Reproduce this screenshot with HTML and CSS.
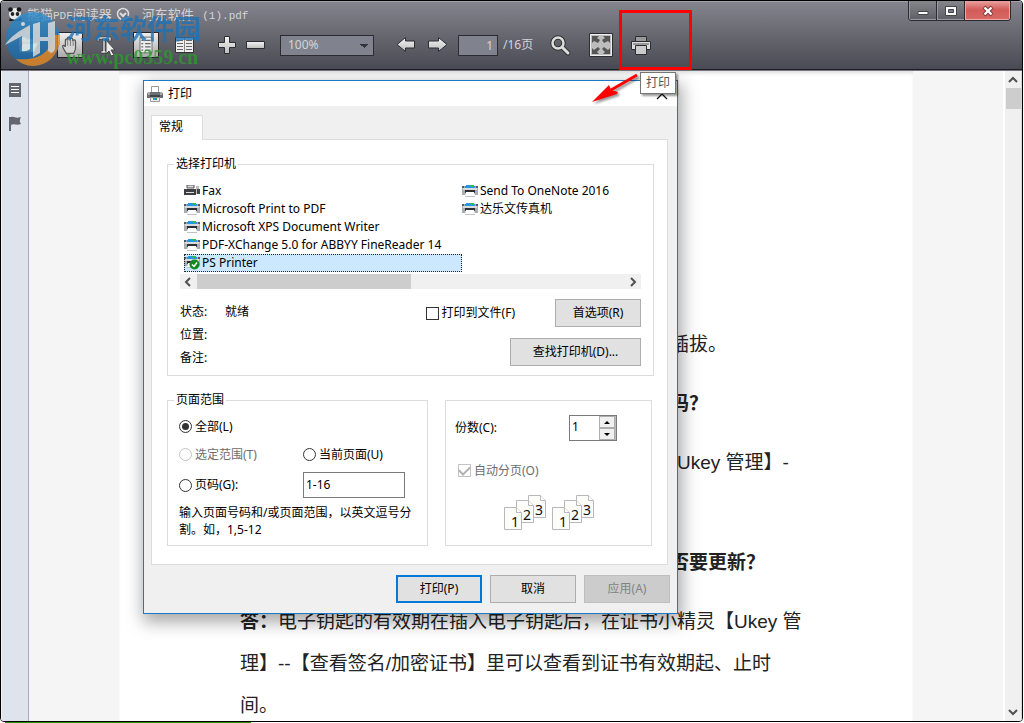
FILE: index.html
```
<!DOCTYPE html>
<html lang="zh-CN">
<head>
<meta charset="utf-8">
<title>熊猫PDF阅读器</title>
<link rel="stylesheet" href="styles.css">
</head>
<body>
<svg class="defs" aria-hidden="true">
  <defs>
    <linearGradient id="silver" x1="0" y1="0" x2="0" y2="1"><stop offset="0" stop-color="#f4f4f4"/><stop offset="1" stop-color="#bdbdbd"/></linearGradient>
    <linearGradient id="globe" x1="0" y1="0" x2="0" y2="1"><stop offset="0" stop-color="#2f8fd0"/><stop offset="1" stop-color="#1565a5"/></linearGradient>
    <symbol id="printer" viewBox="0 0 16 12">
      <path d="M1 1h14l1 3v6H0V4z" fill="#a9adb0"/>
      <path d="M0 1h2v2H0zM14 1h2v2h-2z" fill="#555a5e"/>
      <path d="M4 0h8v1h1v2H3V1h1z" fill="#2497e8"/>
      <path d="M8 0h4v2H9z" fill="#2fc03b"/>
      <path d="M1 3h14v2H1z" fill="#d8dadb"/>
      <path d="M3 5h10v3H3z" fill="#2c2f31"/>
      <path d="M4 7h8l1 4H3z" fill="#fff"/>
      <path d="M3 11h10v1H3z" fill="#bfc2c4"/>
    </symbol>
    <symbol id="sheets" viewBox="0 0 44 36">
      <g fill="#fcfcf8" stroke="#b8b8b8">
        <path d="M24.500 .5h12l5 5v17h-17z"/><path d="M36.500 .5v5h5" fill="#fff"/>
        <path d="M12.500 5.500h12l5 5v17h-17z"/><path d="M24.500 5.500v5h5" fill="#fff"/>
        <path d="M.5 12.500h12l5 5v17H.5z"/><path d="M12.500 12.500v5h5" fill="#fff"/>
      </g>
      <g font-family="'Noto Sans', sans-serif" font-size="14" fill="#111">
        <text x="7" y="32">1</text><text x="19" y="25">2</text><text x="31" y="20">3</text>
      </g>
    </symbol>
  </defs>
</svg>

<div class="app">
  <header class="chrome">
    <div class="titlebar">
      <svg class="panda" viewBox="0 0 15 14"><ellipse cx="7" cy="7" rx="6" ry="6" fill="#e8e8e8"/><circle cx="2.500" cy="2.500" r="2.300" fill="#151515"/><circle cx="11" cy="2.500" r="2.300" fill="#151515"/><ellipse cx="4.500" cy="7" rx="1.800" ry="2" fill="#222"/><ellipse cx="9.500" cy="7" rx="1.800" ry="2" fill="#222"/><path d="M2 11q5 4 11-1l1 4H1z" fill="#1c1c1c"/></svg>
      <span class="app-name">熊猫<span class="latin">PDF</span>阅读器</span>
      <button class="plain menu-btn" aria-label="菜单"><svg width="14" height="14" viewBox="0 0 14 14" fill="none" stroke="#ddd"><circle cx="7" cy="7" r="5.500" stroke-width="1.500"/><path d="M4 6l3 3 3-3" stroke-width="2"/></svg></button>
      <span class="doc-name">河东软件 <span class="latin">(1).pdf</span></span>
      <div class="win-controls">
        <button class="win" aria-label="最小化"><svg width="12" height="10" viewBox="0 0 12 10"><path d="M1 5.500h10v3H1z" fill="#fff" stroke="#444"/></svg></button>
        <button class="win" aria-label="最大化"><svg width="12" height="10" viewBox="0 0 12 10"><path d="M.5 .5h11v9H.5z" fill="#fff" stroke="#444"/><path d="M3.500 3.500h5v3h-5z" fill="#778" stroke="#445"/></svg></button>
        <button class="win close" aria-label="关闭"><svg width="12" height="12" viewBox="0 0 12 12"><path d="M2 2l8 8M10 2l-8 8" stroke="#7c3431" stroke-width="4"/><path d="M2.500 2.500l7 7M9.500 2.500l-7 7" stroke="#fff" stroke-width="2.400"/></svg></button>
      </div>
    </div>
    <div class="toolbar">
      <div class="tools files">
        <button class="tool" aria-label="打开"><svg viewBox="0 0 26 26"><path d="M0 5h6l2 2h6v12H0z" fill="#d9cf9c" stroke="#8c8560"/><path d="M3 11h16l-4 9H0z" fill="#f2ebc0" stroke="#8c8560"/></svg></button>
        <button class="tool on" aria-label="手形"><svg viewBox="0 0 26 26"><path d="M9 22c-2-3-4-6-4-8 0-1 2-1 3 1V8c0-2 2-2 2 0V6c0-2 3-2 3 0v1c0-2 3-2 3 0v2c0-2 3-2 3 0v7c0 3-1 4-2 6z" fill="#d4d4d4" stroke="#555" stroke-width="1.300"/><path d="M10.500 8v6M13.500 7v7M16.500 9v5" stroke="#777"/></svg></button>
        <button class="tool" aria-label="选择文本"><svg viewBox="0 0 26 26"><path d="M2 5h14v4h-2V7h-4v12h3v2H6v-2h2V7H4v2H2z" fill="#eee" stroke="#333" stroke-width=".6"/><path d="M11 8l9 10h-4l3 5-3 1-2-5-3 3z" fill="#ececec" stroke="#444"/></svg></button>
        <button class="tool on" aria-label="单页"><svg viewBox="0 0 26 26"><path d="M6.500 4.500h13v17h-13z" fill="#eee" stroke="#666"/><path d="M8 8h2M12 8h6M8 11.500h2M12 11.500h6M8 15h2M12 15h6M8 18.500h2M12 18.500h6" stroke="#666" stroke-width="1.300"/></svg></button>
        <button class="tool" aria-label="双页"><svg viewBox="0 0 26 26"><path d="M4.500 5.500h18v15h-18z" fill="#eee" stroke="#333"/><path d="M6 8.500h6M6 11.500h6M6 14.500h6M6 17.500h6M15 8.500h6M15 11.500h6M15 14.500h6M15 17.500h6" stroke="#666"/><path d="M13.500 6v14" stroke="#888"/></svg></button>
      </div>
      <div class="tools zoom">
        <button class="tool" aria-label="放大"><svg viewBox="0 0 26 26"><path d="M10.500 4.500h5v6h6v5h-6v6h-5v-6h-6v-5h6z" fill="url(#silver)" stroke="#2c2c32"/></svg></button>
        <button class="tool" aria-label="缩小"><svg viewBox="0 0 26 26"><path d="M4.500 9.500h18v7h-18z" fill="url(#silver)" stroke="#2c2c32"/></svg></button>
      </div>
      <select class="zoom-level" aria-label="缩放"><option>100%</option></select>
      <div class="tools nav">
        <button class="tool" aria-label="上一页"><svg viewBox="0 0 26 26"><path d="M4 12.500L12.500 5.500v3.500h9v7h-9v3.500z" fill="url(#silver)" stroke="#2c2c32"/></svg></button>
        <button class="tool" aria-label="下一页"><svg viewBox="0 0 26 26"><path d="M23 12.500L14.500 5.500v3.500h-10v7h10v3.500z" fill="url(#silver)" stroke="#2c2c32"/></svg></button>
      </div>
      <input class="page-no" type="text" value="1" aria-label="页码">
      <span class="page-total">/16页</span>
      <div class="tools extra">
        <button class="tool" aria-label="搜索"><svg viewBox="0 0 26 26"><circle cx="10" cy="11" r="5.500" fill="none" stroke="#333" stroke-width="4.500"/><path d="M14 15l6 6" stroke="#333" stroke-width="5" stroke-linecap="round"/><circle cx="10" cy="11" r="5.500" fill="none" stroke="#ddd" stroke-width="2.500"/><path d="M14.500 15.500l5.500 5.500" stroke="#ddd" stroke-width="3" stroke-linecap="round"/></svg></button>
        <button class="tool" aria-label="全屏"><svg viewBox="0 0 26 26"><path d="M1.500 1.500h23v23h-23z" fill="#bdbdbd" stroke="#2c2c32"/><path d="M2.500 2.500h21v21h-21z" fill="none" stroke="#eee"/><g fill="#555"><path d="M4 4h7l-2 2 3 2-2 3-4-2-2 2z"/><path d="M22 4h-7l2 2-3 2 2 3 4-2 2 2z"/><path d="M4 22h7l-2-2 3-3-2-2-4 3-2-2z"/><path d="M22 22h-7l2-2-3-3 2-2 4 3 2-2z"/></g></svg></button>
        <button class="tool" aria-label="打印"><svg viewBox="0 0 26 26"><path d="M7.500 4.500h11v5h-11z" fill="#999" stroke="#2c2c32"/><path d="M3.500 9.500h19v8h-19z" fill="#ddd" stroke="#2c2c32"/><path d="M5 12h16" stroke="#555"/><path d="M7.500 13.500h11v9h-11z" fill="#ccc" stroke="#2c2c32"/></svg></button>
      </div>
    </div>
  </header>

  <div class="workspace">
    <nav class="rail">
      <button class="plain" aria-label="目录"><svg width="12" height="14" viewBox="0 0 12 14"><path d="M0 0h12v14H0z" fill="#63666e"/><path d="M2 3.500h8M2 6.500h8M2 9.500h8" stroke="#fff"/></svg></button>
      <button class="plain" aria-label="书签"><svg width="12" height="16" viewBox="0 0 12 16"><path d="M0 1h2v14H0z" fill="#63666e"/><path d="M2 1c4-1 4 2 10 0-2 4-1 5 0 7-5 2-6-1-10 1z" fill="#63666e"/></svg></button>
    </nav>
    <main class="canvas">
      <article class="page">
        <p class="tail">插拔。</p>
        <p class="tail strong">吗？</p>
        <p class="tail link-line">【Ukey 管理】-</p>
        <p class="tail strong question">否要更新？</p>
        <p><b>答：</b>电子钥匙的有效期在插入电子钥匙后，在证书小精灵【Ukey 管<br>理】--【查看签名/加密证书】里可以查看到证书有效期起、止时<br>间。</p>
      </article>
    </main>
    <div class="vscroll">
      <svg width="10" height="8" viewBox="0 0 10 8"><path d="M1 6l4-4 4 4" fill="none" stroke="#505050" stroke-width="2"/></svg>
      <div class="vthumb"></div>
      <svg class="end" width="10" height="8" viewBox="0 0 10 8"><path d="M1 2l4 4 4-4" fill="none" stroke="#505050" stroke-width="2"/></svg>
    </div>
  </div>

  <form class="dialog" role="dialog" aria-label="打印">
    <div class="dlg-title">
      <svg width="16" height="16" viewBox="0 0 16 16"><path d="M4.500 .5h7v6h-7z" fill="#fff" stroke="#999"/><path d="M1 6h14l1 2v4H0V8z" fill="#6a7075"/><path d="M1 6h2v3H1zM13 6h2v3h-2z" fill="#aaa"/><path d="M3 9h10v2H3z" fill="#3f4448"/><path d="M3.500 11.500h9v4h-9z" fill="#eee" stroke="#999"/><path d="M6 12h2v2H6z" fill="#2497e8"/><path d="M8 12h2v2H8z" fill="#2a9a68"/></svg>
      <span>打印</span>
      <button type="button" class="plain dlg-close" aria-label="关闭"><svg width="12" height="12" viewBox="0 0 12 12"><path d="M1 1l10 10M11 1L1 11" stroke="#111" stroke-width="1.200"/></svg></button>
    </div>
    <div class="dlg-body">
      <button type="button" class="tab">常规</button>
      <div class="panel">
        <fieldset class="group">
          <legend>选择打印机</legend>
          <ul class="printers">
            <li><svg width="16" height="12" viewBox="0 0 16 12"><path d="M3 0h7v3H3z" fill="#ddd" stroke="#555"/><path d="M0 4h12v6H0z" fill="#3c4043"/><path d="M2 7h8v1H2z" fill="#ddd"/><path d="M12 1h3v8h-3z" fill="#bbb"/><path d="M13 4h3v5h-3z" fill="#444"/></svg>Fax</li>
            <li><svg width="16" height="12"><use href="#printer"/></svg>Microsoft Print to PDF</li>
            <li><svg width="16" height="12"><use href="#printer"/></svg>Microsoft XPS Document Writer</li>
            <li><svg width="16" height="12"><use href="#printer"/></svg>PDF-XChange 5.0 for ABBYY FineReader 14</li>
            <li class="selected"><svg width="16" height="14" viewBox="0 0 16 14"><use href="#printer" width="16" height="12"/><circle cx="10.500" cy="8.500" r="5" fill="#128a1f"/><path d="M8 8.500l2 2 3-4" fill="none" stroke="#fff" stroke-width="1.400"/></svg>PS Printer</li>
            <li><svg width="16" height="12"><use href="#printer"/></svg>Send To OneNote 2016</li>
            <li><svg width="16" height="12"><use href="#printer"/></svg>达乐文传真机</li>
          </ul>
          <div class="hscroll">
            <svg width="8" height="10" viewBox="0 0 8 10"><path d="M6 1L2 5l4 4" fill="none" stroke="#505050" stroke-width="2"/></svg>
            <div class="hthumb"></div>
            <svg class="end" width="8" height="10" viewBox="0 0 8 10"><path d="M2 1l4 4-4 4" fill="none" stroke="#505050" stroke-width="2"/></svg>
          </div>
          <div class="status">
            <dl>
              <dt>状态:</dt><dd>就绪</dd>
              <dt>位置:</dt><dd></dd>
              <dt>备注:</dt><dd></dd>
            </dl>
            <div class="status-actions">
              <div class="to-file">
                <label class="choice"><input type="checkbox">打印到文件(F)</label>
                <button type="button" class="btn">首选项(R)</button>
              </div>
              <button type="button" class="btn find">查找打印机(D)...</button>
            </div>
          </div>
        </fieldset>

        <div class="lower">
          <fieldset class="group range">
            <legend>页面范围</legend>
            <div class="range-grid">
              <label class="choice whole"><input type="radio" name="range" checked>全部(L)</label>
              <label class="choice off"><input type="radio" name="range" disabled>选定范围(T)</label>
              <label class="choice"><input type="radio" name="range">当前页面(U)</label>
              <label class="choice"><input type="radio" name="range">页码(G):</label>
              <input class="pages" type="text" value="1-16" aria-label="页码">
            </div>
            <p class="hint">输入页面号码和/或页面范围，以英文逗号分<br>割。如，1,5-12</p>
          </fieldset>
          <div class="group copies">
            <div class="copies-row">
              <label for="copies">份数(C):</label>
              <div class="spinner">
                <input id="copies" type="text" value="1">
                <div class="steps">
                  <button type="button" aria-label="增加"><svg width="6" height="3"><path d="M0 3l3-3 3 3z"/></svg></button>
                  <button type="button" aria-label="减少"><svg width="6" height="3"><path d="M0 0l3 3 3-3z"/></svg></button>
                </div>
              </div>
            </div>
            <label class="choice off collate"><input type="checkbox" checked disabled>自动分页(O)</label>
            <div class="sets">
              <svg width="44" height="36"><use href="#sheets"/></svg>
              <svg width="44" height="36"><use href="#sheets"/></svg>
            </div>
          </div>
        </div>
      </div>
      <div class="dlg-actions">
        <button type="button" class="btn primary">打印(P)</button>
        <button type="button" class="btn">取消</button>
        <button type="button" class="btn" disabled>应用(A)</button>
      </div>
    </div>
  </form>

  <div class="highlight"></div>
  <svg class="arrow" width="56" height="40" viewBox="0 0 56 40"><path d="M48 4L22 19" stroke="#f00" stroke-width="3"/><path d="M3 31L20 14l2 5 7 2-1 2z" fill="#f00"/></svg>
  <div class="tooltip">打印</div>

  <div class="watermark" aria-hidden="true">
    <svg width="58" height="56" viewBox="0 0 58 56">
      <circle cx="28" cy="28" r="27" fill="url(#globe)"/>
      <path d="M55 24c1 17-11 31-27 31-7 0-13-3-17-7 26 2 34-8 38-24z" fill="#e58a25"/>
      <path d="M0 34C6 25 14 20 25 14v24q-4 3-8 2V25Q8 30 0 34z" fill="#e9edf0" opacity=".9"/>
      <path d="M28 13l7-2v15h8V12l7-2v27q0 4-4 5l-3-2V30h-8v12l-7 4z" fill="#e9edf0" opacity=".9"/>
      <circle cx="18" cy="13" r="2" fill="#e9edf0"/>
    </svg>
    <div class="wm-text"><span class="wm-name">河东软件园</span><span class="wm-url">www.pc0359.cn</span></div>
  </div>
</div>
<div class="desktop-edge"></div>
</body>
</html>
```
FILE: styles.css
```
* { box-sizing: border-box; }

body {
  margin: 0;
  height: 100vh;
  overflow: hidden;
  background: #fff;
  font: 12px/16px "Noto Sans", "Noto Sans CJK SC", sans-serif;
  color: #000;
}

.defs { position: absolute; width: 0; height: 0; }

button, input, select { font: inherit; color: inherit; margin: 0; }
p, ul, dl, dd { margin: 0; padding: 0; }
svg { display: block; flex: none; }

.plain { border: 0; padding: 0; background: none; }

.app {
  position: relative;
  display: flex;
  flex-direction: column;
  height: calc(100vh - 1px);
  margin-right: 1px;
  border: 1px solid #000;
  border-radius: 4px;
  overflow: hidden;
  background: #fff;
}

.desktop-edge {
  width: 246px;
  height: 1px;
  margin-left: 5px;
  background: #2f8f0a;
}

/* Window chrome */
.chrome {
  flex: none;
  height: 69px;
  border-top: 1px solid #a2a2a8;
  border-bottom: 1px solid #1e1e24;
  background: linear-gradient(#84848e, #66676f 50%, #4a4a54);
  color: #d4d4d8;
}

.titlebar {
  display: flex;
  align-items: flex-start;
  height: 26px;
  padding-left: 7px;
  font-size: 13px;
  line-height: 24px;
}
.panda { width: 15px; height: 14px; margin-top: 5px; }
.latin { font-family: "Liberation Mono", monospace; font-size: 11px; }
.app-name { margin-left: 4px; }
.menu-btn { margin: 5px 0 0 4px; }
.doc-name { margin-left: 12px; }
.doc-name .latin { margin-left: 5px; }

.win-controls {
  display: flex;
  margin: -1px 11px 0 auto;
  border: 1px solid #2a2a30;
  border-top: 0;
  border-radius: 0 0 4px 4px;
  overflow: hidden;
}
.win {
  display: grid;
  place-items: center;
  width: 28px;
  height: 19px;
  padding: 2px 0 0;
  border: 1px solid #9a9aa2;
  border-width: 0 1px 1px;
  background: linear-gradient(#85868c, #606168);
}
.win + .win { box-shadow: -1px 0 #2a2a30; }
.win.close {
  width: 45px;
  border-color: #eea9a5;
  background: linear-gradient(#e9a19f, #d25a57 50%, #d86a66);
}

.toolbar { display: flex; align-items: center; height: 34px; padding-left: 18px; }
.tools { display: flex; }
.files { gap: 12px; }
.zoom { gap: 2px; margin-left: 17px; }
.nav { gap: 5px; margin-left: 19px; }
.extra { gap: 14px; margin-left: 14px; }
.tool { width: 26px; height: 26px; padding: 0; border: 0; background: none; }
.tool svg { width: 26px; height: 26px; }
.tool.on {
  border: 1px solid #24242a;
  background: linear-gradient(#eee, #aaa);
}
.tool.on svg { width: 24px; height: 24px; }

.zoom-level {
  width: 94px;
  height: 21px;
  margin-left: 12px;
  padding: 0 7px;
  border: 1px solid #2b2b31;
  border-radius: 0;
  appearance: none;
  background: conic-gradient(from -45deg at 50% 100%, #33333b 90deg, transparent 0) 79px 8px / 8px 4px no-repeat, #80838d;
}
.page-no {
  width: 40px;
  height: 21px;
  margin-left: 8px;
  padding: 0 4px;
  border: 1px solid #2b2b31;
  background: #80838d;
  text-align: right;
}
.page-total { width: 31px; margin-left: 5px; white-space: nowrap; }

/* Document area */
.workspace { display: flex; flex: 1; min-height: 0; border-top: 1px solid #77727f; }
.rail {
  display: flex;
  flex-direction: column;
  gap: 19px;
  width: 28px;
  padding: 12px 0 0 7px;
  border-left: 1px solid #f2f2f6;
  border-right: 1px solid #a9a9c4;
  background: #dfe3ec;
}
.rail .plain { width: 12px; }
.canvas {
  flex: 1;
  min-width: 0;
  overflow: hidden;
  background: #f5f5f5;
}
.page {
  max-width: 794px;
  min-height: 100%;
  margin: 0 auto;
  padding: 253px 110px 0 121px;
  background: #fff;
  box-shadow: inset 0 4px 4px -2px #ddd;
  color: #222;
  font: 19px/42px "Liberation Sans", "Noto Sans CJK SC", sans-serif;
  white-space: nowrap;
}
.page p + p { margin-top: 17px; }
.page .tail { padding-left: 430px; }
.page .link-line { padding-left: 418px; }
.page p.question { margin-top: 58px; }
.strong { font-weight: bold; }

.vscroll {
  display: flex;
  flex-direction: column;
  align-items: center;
  width: 19px;
  padding: 5px 0;
  border-left: 2px solid #fff;
  border-right: 1px solid #d8d8dc;
  background: #f0f0f0;
}
.vthumb { width: 15px; height: 21px; margin-top: 4px; background: #cdcdcd; }
.end { margin-top: auto; }

/* Print dialog */
.dialog {
  position: absolute;
  left: 142px;
  top: 79px;
  width: 535px;
  border: 1px solid #1a7ac8;
  background: #f0f0f0;
  box-shadow: 2px 6px 16px 2px rgba(0, 0, 0, .35);
}
.dlg-title {
  display: flex;
  align-items: center;
  gap: 5px;
  height: 25px;
  padding: 0 9px 0 3px;
  background: #fff;
}
.dlg-close { margin-left: auto; }
.dlg-body { padding: 9px 9px 10px 7px; }
.tab {
  position: relative;
  display: block;
  width: 52px;
  height: 25px;
  margin-bottom: -1px;
  padding: 0 7px 2px;
  border: 1px solid #dcdcdc;
  border-bottom: 0;
  background: #fff;
  text-align: left;
}
.panel {
  padding: 16px 13px 18px 15px;
  border: 1px solid #dcdcdc;
  background: #fff;
}
.group { min-width: 0; margin: 0; border: 1px solid #dcdcdc; }
fieldset.group { padding: 0 12px 7px; }
legend { margin-left: -6px; padding: 0 2px; line-height: 16px; }

.printers {
  display: grid;
  grid-template-rows: repeat(5, 18px);
  grid-auto-flow: column;
  grid-template-columns: 278px 1fr;
  padding: 10px 0 2px 4px;
  list-style: none;
}
.printers li { display: flex; align-items: center; gap: 2px; white-space: nowrap; }
.printers .selected { outline: 1px dotted #222; outline-offset: -1px; background: #cce8ff; }

.hscroll { display: flex; align-items: center; height: 15px; padding: 0 4px; background: #f0f0f0; }
.hthumb { width: 214px; height: 15px; margin-left: 5px; background: #cdcdcd; }
.hscroll .end { margin: 0 0 0 auto; }

.status { display: flex; justify-content: space-between; margin-top: 10px; }
dl { display: grid; grid-template-columns: 45px auto; grid-auto-rows: 23px; line-height: 25px; }
.status-actions { display: flex; flex-direction: column; align-items: flex-end; gap: 11px; }
.to-file { display: flex; align-items: center; gap: 40px; }

.btn {
  width: 86px;
  height: 28px;
  padding: 0;
  border: 1px solid #adadad;
  background: #e1e1e1;
}
.btn.find { width: 131px; }
.btn.primary { border: 2px solid #0078d7; }
.btn:disabled { border-color: #bfbfbf; background: #ccc; color: #838383; }

.choice { display: flex; align-items: center; gap: 3px; height: 21px; white-space: nowrap; }
.choice input {
  display: grid;
  place-items: center;
  flex: none;
  width: 13px;
  height: 13px;
  border: 1px solid #333;
  appearance: none;
  background: #fff;
}
.choice input[type="radio"] { border-radius: 50%; }
.choice input[type="radio"]:checked::before {
  content: "";
  width: 7px;
  height: 7px;
  border-radius: 50%;
  background: #333;
}
.choice.off { color: #6d6d6d; }
.choice input:disabled { border-color: #c4c4c4; }
.choice input[type="checkbox"]:checked::before {
  content: "";
  width: 9px;
  height: 5px;
  margin-bottom: 3px;
  border: solid #b0b0b0;
  border-width: 0 0 2px 2px;
  rotate: -45deg;
}

.lower { display: flex; align-items: stretch; gap: 17px; margin-top: 16px; }
.range { width: 261px; }
fieldset.range { padding: 0 11px 7px; }
.range legend { margin-left: -5px; }
.range-grid { display: grid; grid-template-columns: 124px 1fr; align-items: center; gap: 7px 0; padding-top: 8px; }
.whole { grid-column: 1 / -1; }
.pages { width: 102px; height: 26px; padding: 0 2px 2px; border: 1px solid #7a7a7a; background: #fff; }
.hint { margin-top: 6px; line-height: 17px; white-space: nowrap; }

.copies { width: 207px; margin-top: 8px; padding: 14px 34px 0 9px; }
.copies-row { display: flex; align-items: center; justify-content: space-between; }
.spinner { display: flex; width: 48px; height: 26px; border: 1px solid #7a7a7a; background: #fff; }
.spinner input { flex: 1; min-width: 0; padding: 0 2px 2px; border: 0; background: none; }
.steps { display: flex; flex-direction: column; width: 17px; border-right: 1px solid #bbb; background: #f0f0f0; }
.steps button { display: grid; place-items: center; flex: 1; padding: 0; border: 1px solid #adadad; background: #f0f0f0; }
.collate { margin: 19px 0 0 3px; }
.sets { display: flex; gap: 4px; margin: 14px -10px 0 49px; }

.dlg-actions { display: flex; justify-content: flex-end; gap: 8px; margin: 10px -2px 0 0; }

/* Annotations over the window */
.highlight {
  position: absolute;
  left: 618px;
  top: 9px;
  width: 73px;
  height: 60px;
  border: 3px solid #f00;
}
.arrow { position: absolute; left: 588px; top: 70px; filter: drop-shadow(2px 2px 1px rgba(0, 0, 0, .4)); }
.tooltip {
  position: absolute;
  left: 639px;
  top: 71px;
  padding: 2px 5px;
  border: 1px solid #767676;
  background: #fff;
  box-shadow: 2px 2px 2px rgba(0, 0, 0, .4);
  color: #575757;
}
.watermark {
  position: absolute;
  left: 4px;
  top: 10px;
  display: flex;
  gap: 3px;
  opacity: .8;
  pointer-events: none;
}
.wm-text { display: flex; flex-direction: column; gap: 2px; }
.wm-name { color: #1d72b8; font: bold 27px/34px "Noto Sans CJK SC", sans-serif; }
.wm-url { color: #2c9a2c; font: bold 20px/20px "Liberation Serif", serif; }
```
